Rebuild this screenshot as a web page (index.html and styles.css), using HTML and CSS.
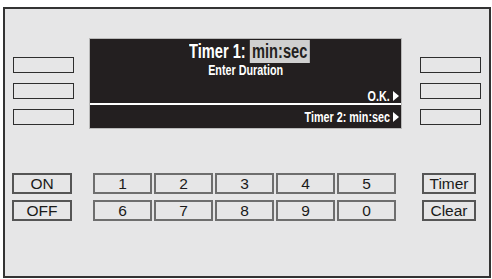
FILE: index.html
```html
<!DOCTYPE html>
<html>
<head>
<meta charset="utf-8">
<link rel="stylesheet" href="styles.css">
</head>
<body>
<div class="panel">
  <div class="top">
    <div class="side">
      <div class="softkey"></div>
      <div class="softkey"></div>
      <div class="softkey"></div>
    </div>
    <div class="screen">
      <div class="main">
        <div class="title"><span class="lbl">Timer 1: </span><span class="hl">min:sec</span></div>
        <div class="sub">Enter Duration</div>
        <div class="opt"><span class="txt">O.K.</span><svg class="tri" width="6" height="10" viewBox="0 0 6 10"><path d="M0 0L6 5L0 10Z" fill="#fff"/></svg></div>
      </div>
      <div class="bar"><span class="txt">Timer 2: min:sec</span><svg class="tri" width="6" height="10" viewBox="0 0 6 10"><path d="M0 0L6 5L0 10Z" fill="#fff"/></svg></div>
    </div>
    <div class="side">
      <div class="softkey"></div>
      <div class="softkey"></div>
      <div class="softkey"></div>
    </div>
  </div>
  <div class="keys">
    <div class="key fn">ON</div>
    <div class="nums">
      <div class="key num">1</div>
      <div class="key num">2</div>
      <div class="key num">3</div>
      <div class="key num">4</div>
      <div class="key num">5</div>
    </div>
    <div class="key fn right">Timer</div>
    <div class="key fn">OFF</div>
    <div class="nums">
      <div class="key num">6</div>
      <div class="key num">7</div>
      <div class="key num">8</div>
      <div class="key num">9</div>
      <div class="key num">0</div>
    </div>
    <div class="key fn right">Clear</div>
  </div>
</div>
</body>
</html>
```

FILE: styles.css
```css
html, body {
  margin: 0;
  padding: 0;
  background: #ffffff;
}

body {
  font-family: "Liberation Sans", Arial, sans-serif;
}

.panel {
  box-sizing: border-box;
  width: 488px;
  height: 271px;
  margin: 7px 0 0 3px;
  border: 2px solid #333333;
  background: #e6e6e7;
  padding: 29px 0 0 8px;
}

.top {
  display: flex;
  align-items: flex-start;
}

.side {
  display: flex;
  flex-direction: column;
  gap: 10px;
  width: 61px;
  padding-top: 19px;
}

.softkey {
  box-sizing: border-box;
  height: 16px;
  border: 1.5px solid #2e2e2e;
  background: #e6e6e7;
}

.screen {
  box-sizing: border-box;
  width: 313px;
  height: 91px;
  margin: 0 18px 0 15px;
  border: 1px solid #b9b9b9;
  background: #ffffff;
  display: flex;
  flex-direction: column;
  gap: 2px;
  color: #ffffff;
  font-family: "Liberation Sans", Arial, sans-serif;
  font-weight: bold;
}

.main {
  height: 64px;
  background: #231f20;
  display: flex;
  flex-direction: column;
  align-items: center;
}

.title {
  margin-top: 1px;
  margin-left: 8px;
  font-size: 19.5px;
  line-height: 23px;
  height: 23px;
  white-space: pre;
  display: inline-block;
  transform: scaleX(0.75);
  transform-origin: center;
}

.hl {
  background: #cfcfcf;
  color: #231f20;
  padding: 0 3px;
  display: inline-block;
}

.sub {
  font-size: 14px;
  line-height: 14px;
  transform: scaleX(0.77);
  transform-origin: center;
}

.opt {
  margin-top: auto;
  align-self: flex-end;
  margin-bottom: 0;
  font-size: 14px;
  line-height: 14px;
  display: flex;
  align-items: center;
  gap: 3px;
  padding-right: 2px;
}

.bar {
  flex: 1;
  background: #231f20;
  display: flex;
  align-items: center;
  justify-content: flex-end;
  gap: 3px;
  padding-right: 2px;
  font-size: 14px;
  line-height: 14px;
}

.txt {
  display: inline-block;
  white-space: pre;
  transform: scaleX(0.77);
  transform-origin: right center;
}

.tri {
  display: block;
}

.keys {
  display: grid;
  grid-template-columns: 60px 303px 59px;
  column-gap: 21px;
  row-gap: 6px;
  margin-top: 44px;
  margin-left: -1px;
}

.keys .right {
  margin-left: 5px;
}

.nums {
  display: grid;
  grid-template-columns: repeat(5, 59px);
  column-gap: 2px;
}

.key {
  box-sizing: border-box;
  height: 21px;
  display: flex;
  align-items: center;
  justify-content: center;
  font-size: 15.5px;
  color: #1a1a1a;
  background: #e6e6e7;
}

.fn {
  border: 2px solid #555555;
}

.num {
  border: 2px solid #6e6e6e;
}
```
